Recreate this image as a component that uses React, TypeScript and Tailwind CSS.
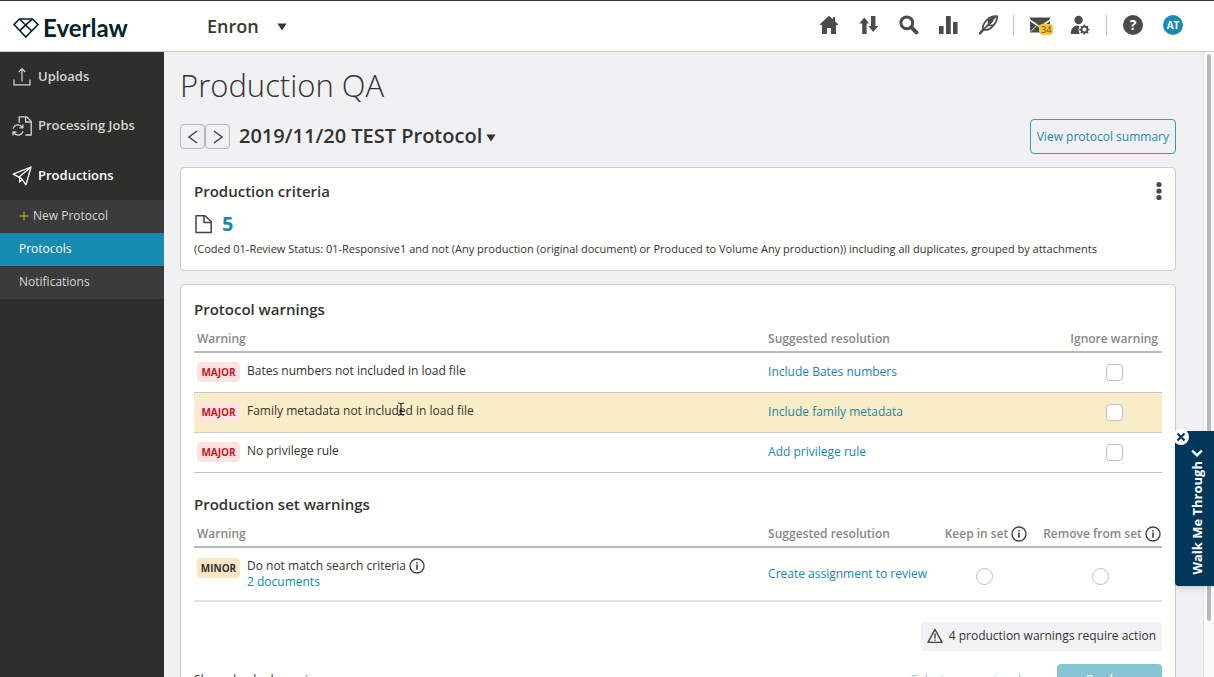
import React, { useState } from 'react';

interface IconProps {
  className?: string;
}

const protocolWarnings = [
  { id: 'bates', text: 'Bates numbers not included in load file', fix: 'Include Bates numbers' },
  { id: 'family', text: 'Family metadata not included in load file', fix: 'Include family metadata' },
  { id: 'privilege', text: 'No privilege rule', fix: 'Add privilege rule' }
];

function LogoMark({ className }: IconProps) {
  return (
    <svg viewBox="0 0 26 20" className={className} fill="none" stroke="currentColor" strokeWidth="1.7" strokeLinejoin="round">
      <path d="M6.5 1H19.5L25 6.5L12.8 19L1 6.5Z" />
      <path d="M6.5 1L18.7 13M12.8 6.8L19.5 1M12.8 6.8L6.8 12.6" />
    </svg>
  );
}

function HomeIcon({ className }: IconProps) {
  return (
    <svg viewBox="0 0 20 20" className={className} fill="currentColor">
      <path d="M10 0.8L0.8 9.2L2 10.4L3 9.6V19H8V13H12V19H17V9.6L18 10.4L19.2 9.2L16.2 6.4V2.2H13.8V4.2Z" />
    </svg>
  );
}

function TransferIcon({ className }: IconProps) {
  return (
    <svg viewBox="0 0 20 20" className={className} fill="currentColor">
      <path d="M5.3 2.5L0.3 8.6H3.2V19H7.6V8.6H10Z" />
      <path d="M14.2 17L19.3 10.9H16.4V1H12V10.9H9.6Z" />
    </svg>
  );
}

function SearchIcon({ className }: IconProps) {
  return (
    <svg viewBox="0 0 20 20" className={className} fill="none" stroke="currentColor">
      <circle cx="7.8" cy="7.8" r="5.9" strokeWidth="3" />
      <path d="M12.4 12.4L17.4 17.4" strokeWidth="4" strokeLinecap="round" />
    </svg>
  );
}

function ChartIcon({ className }: IconProps) {
  return (
    <svg viewBox="0 0 20 20" className={className} fill="currentColor">
      <rect x="0" y="11" width="4.6" height="8" rx="0.6" />
      <rect x="7" y="1" width="4.8" height="18" rx="0.6" />
      <rect x="14" y="7" width="4.6" height="12" rx="0.6" />
    </svg>
  );
}

function FeatherIcon({ className }: IconProps) {
  return (
    <svg viewBox="0 0 20 20" className={className} fill="none" stroke="currentColor" strokeLinecap="round" strokeLinejoin="round">
      <path d="M1 18.4L4.4 14.4" strokeWidth="2.4" />
      <path d="M4.2 14.6L13.6 5.8" strokeWidth="1.8" />
      <path d="M3.8 13.4C3.6 8.8 8 3.4 12.4 1.8C14.4 1 16.6 0.8 18.2 1.4C18.4 4.6 16.6 8 14.4 10.4C12.2 13.2 9 15.2 5.4 15" strokeWidth="1.7" />
      <path d="M8.6 10.4L14.8 10.2M9.6 9.4L9.4 4.4" strokeWidth="1.5" />
      <path d="M9.4 4.4L13.6 1.6L18 1.8L12.8 6.2L9.4 9Z" fill="currentColor" stroke="none" />
    </svg>
  );
}

function MailIcon({ className }: IconProps) {
  return (
    <svg viewBox="0 0 20 16" className={className} fill="currentColor">
      <path d="M0 0.5H20V2.2L10 9L0 2.2Z" />
      <path d="M0 4.2L10 11L20 4.2V15.5H0Z" />
      <path d="M0.6 14.6L6.6 8.8" stroke="#fefefc" strokeWidth="0.9" />
    </svg>
  );
}

function UserGearIcon({ className }: IconProps) {
  return (
    <svg viewBox="0 0 20 20" className={className} fill="none" stroke="currentColor">
      <circle cx="8.6" cy="5" r="4.2" fill="currentColor" stroke="none" />
      <path d="M0.8 19C0.8 13.6 3.4 10.8 7 10.4L9.6 11.4C8.2 13.8 8.4 16.6 9.8 19Z" fill="currentColor" stroke="none" />
      <circle cx="14.4" cy="14.6" r="2.9" strokeWidth="1.8" />
      <path d="M14.4 9.6V11.4M14.4 17.8V19.6M9.4 14.6H11.2M17.6 14.6H19.4M10.9 11.1L12.1 12.3M16.7 16.9L17.9 18.1M17.9 11.1L16.7 12.3M12.1 16.9L10.9 18.1" strokeWidth="1.7" />
    </svg>
  );
}

function UploadIcon({ className }: IconProps) {
  return (
    <svg viewBox="0 0 20 20" className={className} fill="none" stroke="currentColor" strokeWidth="1.2">
      <path d="M2 12.5V17.8H18V12.5" />
      <path d="M10 14.5V2M6.8 5L10 1.6L13.2 5" />
    </svg>
  );
}

function ProcessingIcon({ className }: IconProps) {
  return (
    <svg viewBox="0 0 20 20" className={className} fill="none" stroke="currentColor" strokeWidth="1.3" strokeLinejoin="round">
      <path d="M7.2 6.8V0.8H14.6L19.2 5.4V19H13.4" />
      <path d="M13.6 0.8V6H19" />
      <path d="M1 12.6C2 9.8 4 8.8 6 8.8C8 8.8 9.4 9.8 10.4 11.4M10.8 8.4V11.8H7.4" />
      <path d="M11 15.2C10 18 8 19 6 19C4 19 2.6 18 1.6 16.4M1 19.4V16H4.6" />
    </svg>
  );
}

function PlaneIcon({ className }: IconProps) {
  return (
    <svg viewBox="0 0 20 20" className={className} fill="none" stroke="currentColor" strokeWidth="1.3" strokeLinejoin="round">
      <path d="M1.2 8.2L19 1L14 18.8L9.4 12.4Z" />
      <path d="M19 1L7.6 10.6V16L10.4 13.6" />
    </svg>
  );
}

function DocumentIcon({ className }: IconProps) {
  return (
    <svg viewBox="0 0 18 20" className={className} fill="none" stroke="currentColor" strokeWidth="1.5" strokeLinejoin="round">
      <path d="M2 1.8H11L17.2 7.6V18.6H2Z" />
      <path d="M10 1.8V8.6H17.2" />
    </svg>
  );
}

function InfoIcon({ className }: IconProps) {
  return (
    <svg viewBox="0 0 16 16" className={className} fill="none" stroke="currentColor">
      <circle cx="8" cy="8" r="7" strokeWidth="1.4" />
      <path d="M8 6.6V11.8M8 3.9V5.5" strokeWidth="1.6" />
    </svg>
  );
}

function AlertIcon({ className }: IconProps) {
  return (
    <svg viewBox="0 0 16 16" className={className} fill="none" stroke="currentColor" strokeWidth="1.4" strokeLinejoin="round">
      <path d="M8 1.4L15 14.4H1Z" />
      <path d="M8 5.6V10.4M8 11.4V12.8" />
    </svg>
  );
}

function Caret({ className }: IconProps) {
  return (
    <svg viewBox="0 0 10 8" className={className} fill="currentColor">
      <path d="M0.4 0.5H9.6L5 7.6Z" />
    </svg>
  );
}

function IconButton({ label, children }: { label: string; children: React.ReactNode }) {
  return (
    <button type="button" aria-label={label} className="relative flex size-5 items-center justify-center text-[#4c4b49]">
      {children}
    </button>
  );
}

function Header() {
  return (
    <header className="flex h-[52px] shrink-0 items-center border-t border-b border-t-[#38353a] border-b-[#cbcbcb] bg-[#fefefc]">
      <a href="#" className="flex w-[164px] items-center gap-[3px] pt-1 pl-3 text-[#04232b]">
        <LogoMark className="h-5 w-7" />
        <span className="font-['Lato'] text-2xl leading-8 font-bold">Everlaw</span>
      </a>
      <button type="button" className="ml-[43px] flex items-center gap-[18px] text-lg font-semibold text-[#373737]">
        Enron
        <Caret className="mt-0.5 h-2 w-2.5" />
      </button>

      <nav className="ml-auto flex items-center pr-[31px] pb-0.5">
        <div className="flex gap-5 pr-3.5">
          <IconButton label="Home"><HomeIcon className="size-5" /></IconButton>
          <IconButton label="Transfers"><TransferIcon className="size-5" /></IconButton>
          <IconButton label="Search"><SearchIcon className="size-5" /></IconButton>
          <IconButton label="Analytics"><ChartIcon className="size-5" /></IconButton>
          <IconButton label="Storybuilder"><FeatherIcon className="size-5" /></IconButton>
        </div>
        <div className="flex gap-5 border-l border-[#c4c4c4] px-4">
          <IconButton label="Messages">
            <MailIcon className="h-4 w-5" />
            <span className="absolute top-[9px] left-[9px] rounded bg-[#fbc62d] px-0.5 text-[9px] leading-[11px] text-[#55502f]">34</span>
          </IconButton>
          <IconButton label="Account settings"><UserGearIcon className="size-5" /></IconButton>
        </div>
        <div className="flex gap-5 border-l border-[#c4c4c4] pl-4">
          <button type="button" aria-label="Help" className="size-5 rounded-full bg-[#4c4b49] text-sm leading-5 font-bold text-white">?</button>
          <button type="button" className="size-5 rounded-full bg-[#188bae] text-[10px] leading-5 font-bold text-white">AT</button>
        </div>
      </nav>
    </header>
  );
}

function Sidebar() {
  return (
    <aside className="w-[164px] shrink-0 bg-[#2e2e2c] text-[13px] text-[#d6d6d4]">
      <a href="#" className="flex h-[49px] items-center gap-1.5 pl-3 font-semibold">
        <UploadIcon className="size-5" />
        Uploads
      </a>
      <a href="#" className="flex h-[50px] items-center gap-1.5 pl-3 font-semibold">
        <ProcessingIcon className="size-5" />
        Processing Jobs
      </a>
      <a href="#" className="flex h-[49px] items-center gap-1.5 pl-3 font-semibold text-white">
        <PlaneIcon className="size-5" />
        Productions
      </a>
      <div className="bg-[#3b3b3c] text-xs">
        <a href="#" className="flex h-[33px] items-center gap-1 pb-0.5 pl-[19px]">
          <svg viewBox="0 0 10 10" className="size-2.5" stroke="#9c9c2c" strokeWidth="1.3">
            <path d="M5 0.5V9.5M0.5 5H9.5" />
          </svg>
          New Protocol
        </a>
        <a href="#" className="flex h-[33px] items-center bg-[#178aaf] pb-0.5 pl-[19px] text-white">Protocols</a>
        <a href="#" className="flex h-[33px] items-center pb-0.5 pl-[19px]">Notifications</a>
      </div>
    </aside>
  );
}

function ProtocolWarnings() {
  const [ignored, setIgnored] = useState<string[]>([]);

  const toggle = (id: string) => {
    setIgnored(ignored.includes(id) ? ignored.filter((i) => i !== id) : [...ignored, id]);
  };

  return (
    <>
      <h2 className="text-[15px] leading-5 font-semibold">Protocol warnings</h2>
      <table className="mt-2 w-full table-fixed text-left text-xs">
        <thead className="border-b-2 border-[#b9b9b9] text-[#888]">
          <tr className="h-[25px]">
            <th className="w-[59%] pl-[3px] font-semibold">Warning</th>
            <th className="pl-[3px] font-semibold">Suggested resolution</th>
            <th className="w-24 pr-1 text-right font-semibold">Ignore warning</th>
          </tr>
        </thead>
        <tbody>
          {protocolWarnings.map((w) => (
            <tr key={w.id} className={`h-10 border-b ${w.id === 'family' ? 'border-[#d3cfc8] bg-[#f9edc7]' : 'border-[#c3c3c3]'}`}>
              <td className="pl-[3px]">
                <div className="relative flex items-center gap-[7px]">
                  <span className="w-[43px] rounded bg-[#fde3e2] text-center text-[10px] leading-5 font-bold text-[#c6191f]">MAJOR</span>
                  <span className="pb-0.5">{w.text}</span>
                  {w.id === 'family' && (
                    <svg viewBox="0 0 8 14" className="pointer-events-none absolute bottom-1.5 left-[200px] h-3.5 w-2" fill="none" stroke="#222" strokeWidth="1.1">
                      <path d="M1 1C2.6 1 4 1.6 4 2.6C4 1.6 5.4 1 7 1M4 2.4V11.6M2.6 8.6H5.4M1 13C2.6 13 4 12.4 4 11.4C4 12.4 5.4 13 7 13" />
                    </svg>
                  )}
                </div>
              </td>
              <td className="pl-[3px]">
                <a href="#" className="text-[#1688ae]">{w.fix}</a>
              </td>
              <td>
                <input
                  type="checkbox"
                  aria-label={`Ignore warning: ${w.text}`}
                  checked={ignored.includes(w.id)}
                  onChange={() => toggle(w.id)}
                  className="mx-auto block size-[17px] appearance-none rounded border border-[#c0c0c0] bg-white checked:bg-[#178aaf]"
                />
              </td>
            </tr>
          ))}
        </tbody>
      </table>
    </>
  );
}

function ProductionSetWarnings() {
  const [action, setAction] = useState('');

  return (
    <>
      <h2 className="mt-[21px] text-[15px] leading-5 font-semibold">Production set warnings</h2>
      <table className="mt-2 w-full table-fixed text-left text-xs">
        <thead className="border-b-2 border-[#b9b9b9] text-[#888]">
          <tr className="h-[25px]">
            <th className="w-[59%] pl-[3px] font-semibold">Warning</th>
            <th className="pl-[3px] font-semibold">Suggested resolution</th>
            <th className="w-28 font-semibold">
              <span className="flex items-center justify-center gap-[3px]">Keep in set <InfoIcon className="size-4 text-[#444]" /></span>
            </th>
            <th className="w-[120px] font-semibold">
              <span className="flex items-center justify-center gap-[3px]">Remove from set <InfoIcon className="size-4 text-[#444]" /></span>
            </th>
          </tr>
        </thead>
        <tbody>
          <tr className="h-[54px] border-b-2 border-[#e1e1e1]">
            <td className="pl-[3px]">
              <div className="flex items-start gap-[7px]">
                <span className="w-[43px] rounded bg-[#fbe5c5] text-center text-[10px] leading-5 font-bold">MINOR</span>
                <div className="leading-4">
                  <p className="flex items-center gap-[3px]">Do not match search criteria <InfoIcon className="size-4 text-[#444]" /></p>
                  <a href="#" className="text-[#1688ae]">2 documents</a>
                </div>
              </div>
            </td>
            <td className="pl-[3px]">
              <a href="#" className="text-[#1688ae]">Create assignment to review</a>
            </td>
            {['keep', 'remove'].map((value) => (
              <td key={value} className="pt-1.5 pr-1">
                <input
                  type="radio"
                  name="set-action"
                  aria-label={value === 'keep' ? 'Keep in set' : 'Remove from set'}
                  checked={action === value}
                  onChange={() => setAction(value)}
                  className="mx-auto block size-[17px] appearance-none rounded-full border border-[#c0c0c0] bg-white checked:bg-[#178aaf]"
                />
              </td>
            ))}
          </tr>
        </tbody>
      </table>
    </>
  );
}

function WalkMeTab() {
  return (
    <div className="absolute right-0 bottom-[91px] z-10">
      <button type="button" className="flex h-[155px] w-[39px] flex-col items-center rounded-l bg-[#03375a] pt-4 pl-1 text-white shadow-md">
        <svg viewBox="0 0 10 10" className="size-3" fill="none" stroke="currentColor" strokeWidth="2">
          <path d="M1 3L5 7L9 3" />
        </svg>
        <span className="mt-0.5 rotate-180 text-[13px] leading-5 font-bold whitespace-nowrap [writing-mode:vertical-rl]">Walk Me Through</span>
      </button>
      <button type="button" aria-label="Close" className="absolute -top-0.5 -left-0.5 flex size-4 items-center justify-center rounded-full bg-white text-[#03375a]">
        <svg viewBox="0 0 10 10" className="size-2.5" stroke="currentColor" strokeWidth="2.2">
          <path d="M1.5 1.5L8.5 8.5M8.5 1.5L1.5 8.5" />
        </svg>
      </button>
    </div>
  );
}

export default function App() {
  return (
    <div className="relative flex h-screen flex-col overflow-hidden bg-[#f1f1f4] font-['Open_Sans',sans-serif] text-[#333]">
      <Header />
      <div className="flex min-h-0 flex-1">
        <Sidebar />

        <main className="min-w-0 flex-1 overflow-hidden pt-[11px] pr-[27px] pl-4">
          <h1 className="text-[31px] leading-[44px] font-light">Production QA</h1>

          <div className="mt-3 flex items-center">
            <button type="button" aria-label="Previous protocol" className="flex size-[25px] items-center justify-center rounded-sm border border-[#b5b5b7] text-[#444]">
              <svg viewBox="0 0 12 14" className="h-3.5 w-3" fill="none" stroke="currentColor" strokeWidth="1.5"><path d="M10 1L2 7L10 13" /></svg>
            </button>
            <button type="button" aria-label="Next protocol" className="flex size-[25px] items-center justify-center rounded-sm border border-[#b5b5b7] text-[#444]">
              <svg viewBox="0 0 12 14" className="h-3.5 w-3" fill="none" stroke="currentColor" strokeWidth="1.5"><path d="M2 1L10 7L2 13" /></svg>
            </button>
            <button type="button" className="ml-[9px] flex items-center gap-1 pb-0.5 text-xl leading-7 font-semibold">
              2019/11/20 TEST Protocol
              <Caret className="mt-1 h-2 w-2.5" />
            </button>
            <button type="button" className="ml-auto h-[35px] rounded-sm border border-[#3a9cbc] px-1.5 text-xs text-[#178aaf]">
              View protocol summary
            </button>
          </div>

          <section className="relative mt-[13px] rounded-sm border border-[#ccc] bg-[#fefefd] px-[13px] pt-[13px] pb-3">
            <h2 className="text-[15px] leading-5 font-semibold">Production criteria</h2>
            <div className="mt-[9px] flex items-center gap-2.5">
              <DocumentIcon className="h-5 w-[18px] text-[#444]" />
              <span className="text-xl leading-7 font-bold text-[#178aaf]">5</span>
            </div>
            <p className="mt-0.5 text-[11px] leading-[18px]">
              (Coded 01-Review Status: 01-Responsive1 and not (Any production (original document) or Produced to Volume Any production)) including all duplicates, grouped by attachments
            </p>
            <button type="button" aria-label="More options" className="absolute top-[13px] right-3 text-[#4a4a4a]">
              <svg viewBox="0 0 8 20" className="h-5 w-2" fill="currentColor">
                <circle cx="4" cy="3.5" r="2.6" />
                <circle cx="4" cy="10" r="2.6" />
                <circle cx="4" cy="16.5" r="2.6" />
              </svg>
            </button>
          </section>

          <section className="mt-[13px] rounded-sm border border-[#ccc] bg-[#fefefd] px-[13px] pt-3.5 pb-4">
            <ProtocolWarnings />
            <ProductionSetWarnings />

            <div className="mt-5 flex justify-end">
              <div className="flex h-[29px] items-center gap-1.5 rounded-sm bg-[#f2f2f4] px-1.5 text-xs">
                <AlertIcon className="size-4 text-[#444]" />
                4 production warnings require action
              </div>
            </div>

            <div className="mt-[13px] flex h-8 items-center text-xs">
              <p>Show checked warnings</p>
              <button type="button" disabled className="ml-auto text-[#8cc8d9]">Select new protocol</button>
              <button type="button" disabled className="ml-9 h-8 w-[105px] rounded-sm bg-[#88c5d4] text-white">Produce</button>
            </div>
          </section>
        </main>

        <div className="w-[11px] shrink-0 border-l border-[#e2e2e6] bg-[#fafafb] px-[3px] pt-0.5">
          <div className="h-[91%] rounded-full bg-[#bbbbbd]" />
        </div>
      </div>

      <WalkMeTab />
    </div>
  );
}
